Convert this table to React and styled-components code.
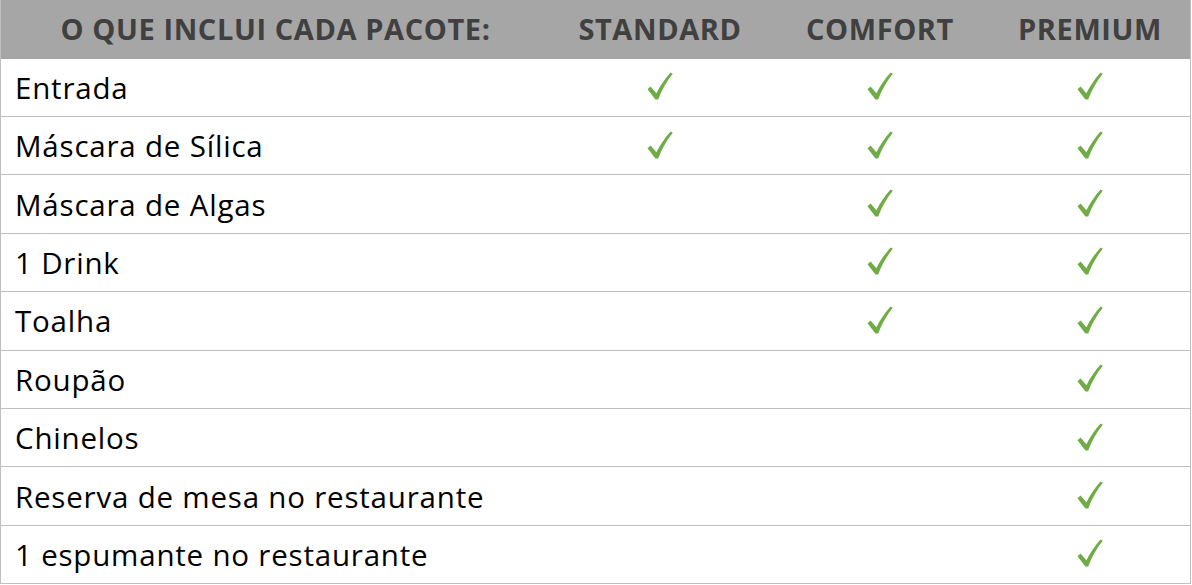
import React from "react";
import styled, { createGlobalStyle } from "styled-components";

const packages = ["STANDARD", "COMFORT", "PREMIUM"];

const items = [
  { name: "Entrada", level: 0 },
  { name: "Máscara de Sílica", level: 0 },
  { name: "Máscara de Algas", level: 1 },
  { name: "1 Drink", level: 1 },
  { name: "Toalha", level: 1 },
  { name: "Roupão", level: 2 },
  { name: "Chinelos", level: 2 },
  { name: "Reserva de mesa no restaurante", level: 2 },
  { name: "1 espumante no restaurante", level: 2 },
];

const GlobalStyle = createGlobalStyle`
  html, body {
    margin: 0;
    padding: 0;
    background: #ffffff;
  }
  body {
    font-family: "Open Sans", "Liberation Sans", sans-serif;
  }
`;

const Table = styled.div`
  width: 1191px;
  border-left: 1px solid #bfbfbf;
  border-right: 1px solid #bfbfbf;
  box-sizing: border-box;
`;

const Row = styled.div`
  display: grid;
  grid-template-columns: 549px 220px 220px 1fr;
  align-items: center;
  height: ${(p) => (p.head ? "58.6px" : "58.4px")};
  box-sizing: border-box;
  background: ${(p) => (p.head ? "#a6a6a6" : "#ffffff")};
  border-bottom: ${(p) => (p.head ? "none" : "1px solid #bfbfbf")};
`;

const HeadCell = styled.div`
  font-weight: 700;
  font-size: 29px;
  color: #404040;
  text-align: center;
  white-space: nowrap;
  letter-spacing: 0.6px;
  padding-bottom: 1px;
`;

const NameCell = styled.div`
  font-size: 29.5px;
  letter-spacing: 0.8px;
  color: #000000;
  padding-left: 14px;
  white-space: nowrap;
`;

const CheckCell = styled.div`
  display: flex;
  justify-content: center;
  align-items: center;
  padding-bottom: 2px;
`;

const Check = () => (
  <svg width="26" height="28" viewBox="0 0 26 28">
    <path
      d="M0.5 17.2 L3.6 14.6 L9.4 21.2 C13 14 18 6.5 23.6 0.4 L25.8 1.8 C19.5 9.5 14.5 18.5 11.2 27.6 L8.4 27.6 Z"
      fill="#6fac46"
    />
  </svg>
);

export default function App() {
  return (
    <>
      <GlobalStyle />
      <Table>
        <Row head>
          <HeadCell>O QUE INCLUI CADA PACOTE:</HeadCell>
          {packages.map((p) => (
            <HeadCell key={p}>{p}</HeadCell>
          ))}
        </Row>
        {items.map((it) => (
          <Row key={it.name}>
            <NameCell>{it.name}</NameCell>
            {packages.map((p, i) => (
              <CheckCell key={p}>{i >= it.level ? <Check /> : null}</CheckCell>
            ))}
          </Row>
        ))}
      </Table>
    </>
  );
}
